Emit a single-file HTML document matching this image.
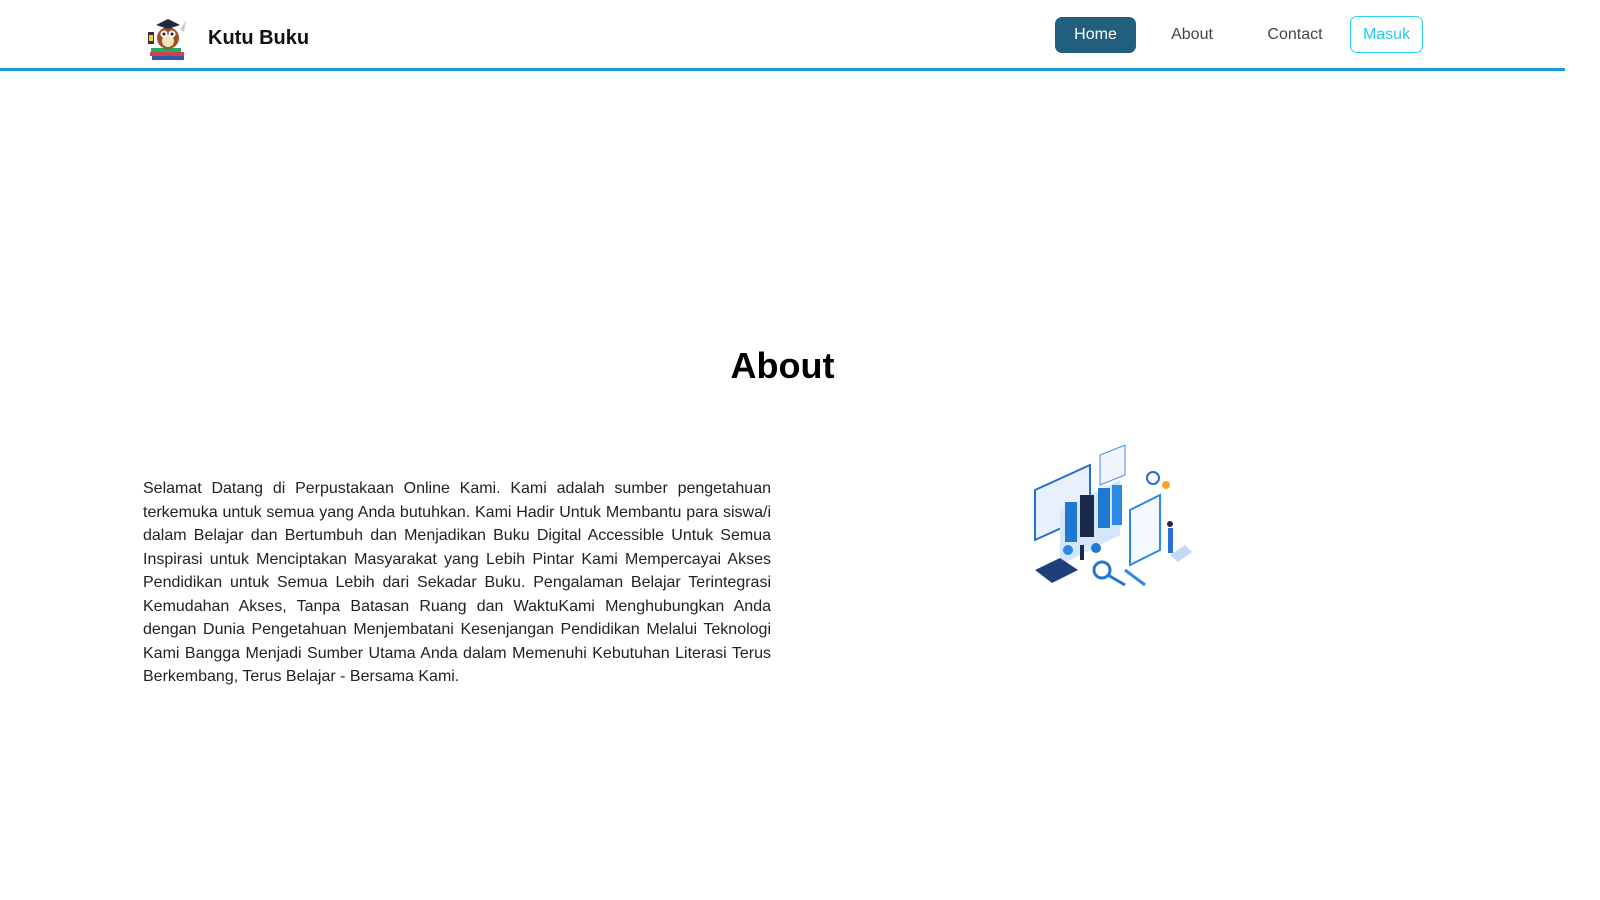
<!DOCTYPE html>
<html><head><meta charset="utf-8"><style>
body{margin:0;width:1600px;height:900px;background:#fff;font-family:"Liberation Sans",Arial,sans-serif;overflow:hidden;position:relative}
.nav{position:absolute;left:0;top:0;width:1565px;height:68px;border-bottom:3px solid #1a9bd0}
.brand{position:absolute;left:208px;top:27px;font-size:20px;font-weight:bold;color:#111}
.btn{position:absolute;top:17px;height:36px;line-height:36px;font-size:16px;text-align:center;box-sizing:border-box;border-radius:7px}
.home{left:1055px;width:81px;background:#225e7d;color:#fff}
.l{color:#444}
.masuk{left:1350px;width:73px;border:1.5px solid #2ad0f5;color:#2ac7f0;top:16px;height:37px}
h1{position:absolute;left:0;width:1565px;top:345px;margin:0;text-align:center;font-size:36px;font-weight:bold;color:#000}
p{position:absolute;left:143px;top:477px;width:628px;margin:0;font-size:16px;line-height:23.5px;text-align:justify;color:#222}
</style></head><body>
<div class="nav">
<svg style="position:absolute;left:146px;top:16px" width="44" height="46" viewBox="0 0 44 46">
<rect x="4" y="36" width="34" height="4" fill="#c44"/><rect x="6" y="40" width="32" height="4" fill="#35a"/><rect x="5" y="32" width="30" height="4" fill="#2a6"/>
<ellipse cx="22" cy="22" rx="11" ry="11" fill="#a0522d"/><ellipse cx="22" cy="25" rx="6" ry="6" fill="#f3e2c0"/>
<circle cx="18" cy="18" r="3.5" fill="#fff"/><circle cx="26" cy="18" r="3.5" fill="#fff"/><circle cx="18" cy="18" r="1.5" fill="#222"/><circle cx="26" cy="18" r="1.5" fill="#222"/>
<polygon points="10,9 22,3 34,9 22,13" fill="#1e2a3a"/><rect x="2" y="16" width="6" height="12" fill="#333"/><rect x="3" y="19" width="4" height="6" fill="#fc3"/>
<path d="M34 14 L40 4 L38 16 Z" fill="#ccc"/></svg>
<div class="brand">Kutu Buku</div>
<div class="btn home">Home</div>
<div class="btn l" style="left:1160px;width:64px">About</div>
<div class="btn l" style="left:1260px;width:70px">Contact</div>
<div class="btn masuk">Masuk</div>
</div>
<h1>About</h1>
<p>Selamat Datang di Perpustakaan Online Kami. Kami adalah sumber pengetahuan terkemuka untuk semua yang Anda butuhkan. Kami Hadir Untuk Membantu para siswa/i dalam Belajar dan Bertumbuh dan Menjadikan Buku Digital Accessible Untuk Semua Inspirasi untuk Menciptakan Masyarakat yang Lebih Pintar Kami Mempercayai Akses Pendidikan untuk Semua Lebih dari Sekadar Buku. Pengalaman Belajar Terintegrasi Kemudahan Akses, Tanpa Batasan Ruang dan WaktuKami Menghubungkan Anda dengan Dunia Pengetahuan Menjembatani Kesenjangan Pendidikan Melalui Teknologi Kami Bangga Menjadi Sumber Utama Anda dalam Memenuhi Kebutuhan Literasi Terus Berkembang, Terus Belajar - Bersama Kami.</p>
<svg style="position:absolute;left:1020px;top:440px" width="190" height="160" viewBox="0 0 190 160">
<polygon points="15,50 70,25 70,75 15,100" fill="#e8f0fb" stroke="#1f6fd1" stroke-width="2"/>
<polygon points="80,15 105,5 105,35 80,45" fill="#f0f5fc" stroke="#4a90e2"/>
<polygon points="40,70 100,40 100,95 40,125" fill="#d6e6fa"/>
<rect x="45" y="62" width="12" height="40" fill="#1f78d1"/><rect x="60" y="55" width="14" height="42" fill="#1b2a4a"/><rect x="78" y="48" width="12" height="40" fill="#1f78d1"/><rect x="92" y="45" width="10" height="40" fill="#2a8be6"/>
<polygon points="110,70 140,55 140,110 110,125" fill="#f5f9ff" stroke="#2a8be6" stroke-width="2"/>
<circle cx="133" cy="38" r="6" fill="#fff" stroke="#1f6fd1" stroke-width="2"/>
<circle cx="146" cy="45" r="4" fill="#f6a623"/>
<rect x="148" y="88" width="5" height="25" fill="#2a6fd1"/><circle cx="150" cy="84" r="3" fill="#1b2a4a"/>
<polygon points="150,115 165,105 172,112 158,122" fill="#c7d8f5"/>
<polygon points="15,130 40,118 58,130 32,143" fill="#1f3f7a"/>
<circle cx="82" cy="130" r="8" fill="none" stroke="#1f78d1" stroke-width="3"/><line x1="88" y1="135" x2="105" y2="145" stroke="#1f78d1" stroke-width="3"/>
<line x1="105" y1="130" x2="125" y2="145" stroke="#2a8be6" stroke-width="3"/>
<circle cx="48" cy="110" r="5" fill="#2a8be6"/><rect x="60" y="105" width="4" height="15" fill="#1b2a4a"/><circle cx="76" cy="108" r="5" fill="#1f78d1"/>
</svg>
</body></html>
